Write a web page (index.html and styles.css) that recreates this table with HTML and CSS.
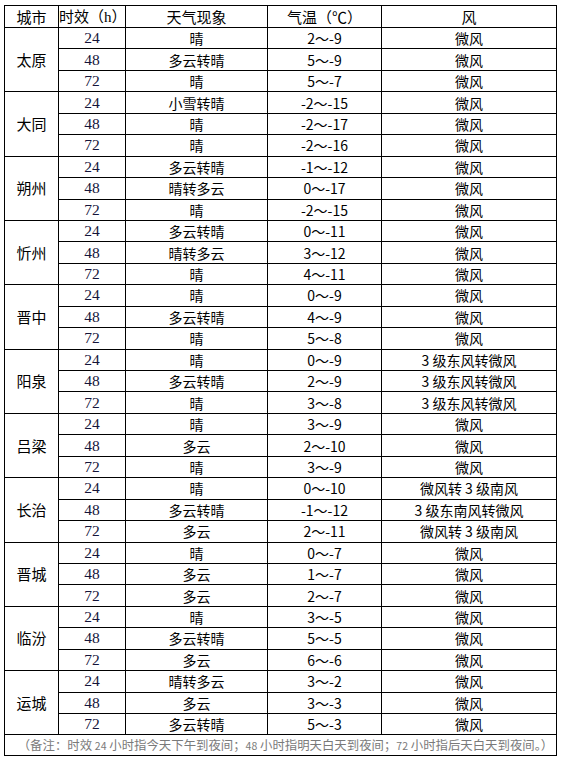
FILE: index.html
```html
<!DOCTYPE html>
<html lang="zh">
<head>
<meta charset="utf-8">
<title>山西城市天气预报</title>
<link rel="stylesheet" href="styles.css">
</head>
<body>
<table class="fc">
  <colgroup>
    <col class="c-city"><col class="c-hr"><col class="c-wx"><col class="c-tmp"><col class="c-wind">
  </colgroup>
  <thead>
    <tr class="hd"><th>城市</th><th>时效<span class="paren">（</span><span class="h">h</span><span class="paren">）</span></th><th>天气现象</th><th>气温（℃）</th><th>风</th></tr>
  </thead>
  <tbody>
    <tr><td class="city" rowspan="3">太原</td><td class="hr">24</td><td>晴</td><td>2～-9</td><td>微风</td></tr>
    <tr><td class="hr">48</td><td>多云转晴</td><td>5～-9</td><td>微风</td></tr>
    <tr><td class="hr">72</td><td>晴</td><td>5～-7</td><td>微风</td></tr>

    <tr><td class="city" rowspan="3">大同</td><td class="hr">24</td><td>小雪转晴</td><td>-2～-15</td><td>微风</td></tr>
    <tr><td class="hr">48</td><td>晴</td><td>-2～-17</td><td>微风</td></tr>
    <tr><td class="hr">72</td><td>晴</td><td>-2～-16</td><td>微风</td></tr>

    <tr><td class="city" rowspan="3">朔州</td><td class="hr">24</td><td>多云转晴</td><td>-1～-12</td><td>微风</td></tr>
    <tr><td class="hr">48</td><td>晴转多云</td><td>0～-17</td><td>微风</td></tr>
    <tr><td class="hr">72</td><td>晴</td><td>-2～-15</td><td>微风</td></tr>

    <tr><td class="city" rowspan="3">忻州</td><td class="hr">24</td><td>多云转晴</td><td>0～-11</td><td>微风</td></tr>
    <tr><td class="hr">48</td><td>晴转多云</td><td>3～-12</td><td>微风</td></tr>
    <tr><td class="hr">72</td><td>晴</td><td>4～-11</td><td>微风</td></tr>

    <tr><td class="city" rowspan="3">晋中</td><td class="hr">24</td><td>晴</td><td>0～-9</td><td>微风</td></tr>
    <tr><td class="hr">48</td><td>多云转晴</td><td>4～-9</td><td>微风</td></tr>
    <tr><td class="hr">72</td><td>晴</td><td>5～-8</td><td>微风</td></tr>

    <tr><td class="city" rowspan="3">阳泉</td><td class="hr">24</td><td>晴</td><td>0～-9</td><td>3 级东风转微风</td></tr>
    <tr><td class="hr">48</td><td>多云转晴</td><td>2～-9</td><td>3 级东风转微风</td></tr>
    <tr><td class="hr">72</td><td>晴</td><td>3～-8</td><td>3 级东风转微风</td></tr>

    <tr><td class="city" rowspan="3">吕梁</td><td class="hr">24</td><td>晴</td><td>3～-9</td><td>微风</td></tr>
    <tr><td class="hr">48</td><td>多云</td><td>2～-10</td><td>微风</td></tr>
    <tr><td class="hr">72</td><td>晴</td><td>3～-9</td><td>微风</td></tr>

    <tr><td class="city" rowspan="3">长治</td><td class="hr">24</td><td>晴</td><td>0～-10</td><td>微风转 3 级南风</td></tr>
    <tr><td class="hr">48</td><td>多云转晴</td><td>-1～-12</td><td>3 级东南风转微风</td></tr>
    <tr><td class="hr">72</td><td>多云</td><td>2～-11</td><td>微风转 3 级南风</td></tr>

    <tr><td class="city" rowspan="3">晋城</td><td class="hr">24</td><td>晴</td><td>0～-7</td><td>微风</td></tr>
    <tr><td class="hr">48</td><td>多云</td><td>1～-7</td><td>微风</td></tr>
    <tr><td class="hr">72</td><td>多云</td><td>2～-7</td><td>微风</td></tr>

    <tr><td class="city" rowspan="3">临汾</td><td class="hr">24</td><td>晴</td><td>3～-5</td><td>微风</td></tr>
    <tr><td class="hr">48</td><td>多云转晴</td><td>5～-5</td><td>微风</td></tr>
    <tr><td class="hr">72</td><td>多云</td><td>6～-6</td><td>微风</td></tr>

    <tr><td class="city" rowspan="3">运城</td><td class="hr">24</td><td>晴转多云</td><td>3～-2</td><td>微风</td></tr>
    <tr><td class="hr">48</td><td>多云</td><td>3～-3</td><td>微风</td></tr>
    <tr><td class="hr">72</td><td>多云转晴</td><td>5～-3</td><td>微风</td></tr>
  </tbody>
  <tfoot>
    <tr class="ft"><td colspan="5">（备注：时效 <span class="sm">24</span> 小时指今天下午到夜间；<span class="sm">48</span> 小时指明天白天到夜间；<span class="sm">72</span> 小时指后天白天到夜间。）</td></tr>
  </tfoot>
</table>
</body>
</html>
```

FILE: styles.css
```css
html, body {
  margin: 0;
  padding: 0;
  background: #fff;
}

body {
  padding: 5px 0 0 4px;
  font-family: "Noto Sans CJK SC", "Noto Sans", sans-serif;
  font-size: 14px;
  color: #000;
}

.fc {
  border-collapse: collapse;
  table-layout: fixed;
  width: 552px;
}

.c-city { width: 54px; }
.c-hr { width: 67px; }
.c-wx { width: 142px; }
.c-tmp { width: 114px; }
.c-wind { width: 175px; }

.fc th,
.fc td {
  border: 1px solid #000;
  padding: 0;
  text-align: center;
  vertical-align: middle;
  font-weight: normal;
  line-height: 16px;
  white-space: nowrap;
  overflow: hidden;
}

.fc tbody tr {
  height: 21.45px;
}

.fc .hd {
  height: 22px;
}

.fc .hd th {
  font-size: 15px;
}

.hd .h {
  font-family: "Liberation Serif", serif;
  font-size: 15px;
}

.fc .city {
  font-size: 15px;
}

.fc .hr {
  font-family: "Liberation Serif", serif;
  font-size: 15.5px;
  color: #14143a;
}

.fc .ft {
  height: 21px;
}

.fc .ft td {
  color: #7a7a7a;
  font-size: 12.4px;
  text-align: center;
  padding-left: 10px;
}

.ft .sm {
  font-size: 10.5px;
}
```
